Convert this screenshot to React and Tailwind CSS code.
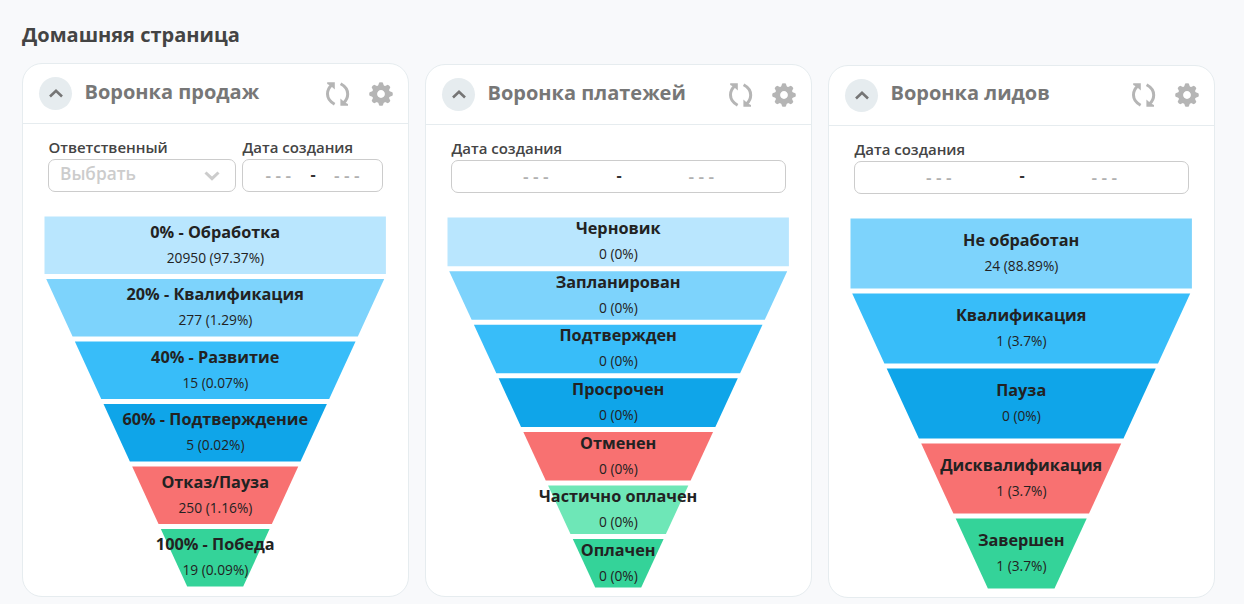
const C = {
  sky1: "#b9e6fe",
  sky2: "#7dd3fc",
  sky3: "#38bdf9",
  sky4: "#0fa5e9",
  red: "#f87171",
  mint: "#6ee7b7",
  green: "#34d399",
};

const CARDS = [
  {
    title: "Воронка продаж",
    select: true,
    bottomHalf: 28,
    stages: [
      ["0% - Обработка", "20950 (97.37%)", C.sky1],
      ["20% - Квалификация", "277 (1.29%)", C.sky2],
      ["40% - Развитие", "15 (0.07%)", C.sky3],
      ["60% - Подтверждение", "5 (0.02%)", C.sky4],
      ["Отказ/Пауза", "250 (1.16%)", C.red],
      ["100% - Победа", "19 (0.09%)", C.green],
    ],
  },
  {
    title: "Воронка платежей",
    bottomHalf: 23,
    stages: [
      ["Черновик", "0 (0%)", C.sky1],
      ["Запланирован", "0 (0%)", C.sky2],
      ["Подтвержден", "0 (0%)", C.sky3],
      ["Просрочен", "0 (0%)", C.sky4],
      ["Отменен", "0 (0%)", C.red],
      ["Частично оплачен", "0 (0%)", C.mint],
      ["Оплачен", "0 (0%)", C.green],
    ],
  },
  {
    title: "Воронка лидов",
    bottomHalf: 33.3,
    stages: [
      ["Не обработан", "24 (88.89%)", C.sky2],
      ["Квалификация", "1 (3.7%)", C.sky3],
      ["Пауза", "0 (0%)", C.sky4],
      ["Дисквалификация", "1 (3.7%)", C.red],
      ["Завершен", "1 (3.7%)", C.green],
    ],
  },
];

const WIDTH = 341.4;
const HEIGHT = 370;
const GAP = 5;

function Funnel({ stages, bottomHalf }) {
  const h = (HEIGHT - GAP * (stages.length - 1)) / stages.length;
  const mid = WIDTH / 2;
  const slope = (mid - 1.7 - bottomHalf) / (HEIGHT - h - GAP);
  const half = (y) => bottomHalf + (HEIGHT - y) * slope;
  return (
    <svg width="342" height="371" viewBox="-0.5 -0.6 342 371" className="block shrink-0 overflow-visible">
      {stages.map(([name, value, fill], i) => {
        const y0 = i * (h + GAP);
        const y1 = y0 + h;
        const t = i === 0 ? mid : half(y0);
        const b = i === 0 ? mid : half(y1);
        return (
          <polygon
            key={name}
            fill={fill}
            points={`${mid - t},${y0} ${mid + t},${y0} ${mid + b},${y1} ${mid - b},${y1}`}
          />
        );
      })}
      {stages.map(([name, value], i) => {
        const c = i * (h + GAP) + h / 2;
        return (
          <g key={name} textAnchor="middle" fill="#222">
            <text x={mid} y={c - 7.65} className="text-[16.25px] font-bold">{name}</text>
            <text x={mid + 0.2} y={c + 17.35} className="text-[13.75px]">{value}</text>
          </g>
        );
      })}
    </svg>
  );
}

function RefreshIcon() {
  return (
    <svg width="24" height="24" viewBox="0.4 0 24 24" fill="none" stroke="#b5b5b5" strokeWidth="3">
      <path d="M9 22.2C4.6 19.8 1.9 16.4 1.9 12C1.9 8.6 3.2 5.6 6 3.2" />
      <path d="M15 1.8C19.4 4.2 22.1 7.6 22.1 12C22.1 15.4 20.8 18.4 18 20.8" />
      <path d="M1.6 .2H9.2V7.6L7 5.4L4.6 3.6L1.6 2ZM22.4 23.8H14.8V16.4L17 18.6L19.4 20.4L22.4 22Z" fill="#b5b5b5" stroke="none" />
    </svg>
  );
}

function GearIcon() {
  return (
    <svg width="24" height="24" viewBox="-12 -12 24 24" className="ml-[19px]" fill="#b5b5b5">
      <circle r="6.5" fill="none" stroke="#b5b5b5" strokeWidth="5.2" />
      {[0, 45, 90, 135, 180, 225, 270, 315].map((a) => (
        <path key={a} transform={`rotate(${a})`} d="M-3 -8L-1.8 -11.4Q0 -12.2 1.8 -11.4L3 -8Z" />
      ))}
    </svg>
  );
}

function Label({ children }) {
  return <div className="h-[20px] pl-[0.4px] text-[15px] leading-[17.4px] font-semibold text-[#444]">{children}</div>;
}

function DateField() {
  return (
    <div className="flex-1">
      <Label>Дата создания</Label>
      <div className="flex h-[33px] items-center rounded-[7px] border border-[#ccc] pr-[3px] pl-[3px]">
        <span className="flex-1 pt-px text-center text-[17.3px] font-semibold text-[#b0b0b0]">- - -</span>
        <span className="w-[4px] pb-1 text-center text-[16px] leading-5 font-bold text-[#333]">-</span>
        <span className="flex-1 pt-px text-center text-[17.3px] font-semibold text-[#b0b0b0]">- - -</span>
      </div>
    </div>
  );
}

function Card({ title, select, stages, bottomHalf }) {
  return (
    <section className="flex h-[533.2px] w-[387px] flex-col rounded-[20px] border border-[#e6ecef] bg-white">
      <header className="flex h-[60px] shrink-0 items-center border-b border-[#e6ecef] pr-[15px] pl-4">
        <span className="flex size-[33px] items-center justify-center rounded-full bg-[#e6ecef]">
          <svg width="14" height="9" viewBox="0 0 14 9" fill="none" stroke="#757575" strokeWidth="2.6">
            <path d="M1 7.5L7 1.8L13 7.5" />
          </svg>
        </span>
        <h2 className="ml-[12.5px] flex-1 pb-1 text-[20px] leading-7 font-bold text-[#777]">{title}</h2>
        <RefreshIcon />
        <GearIcon />
      </header>
      <div className="flex gap-[6px] pt-[15px] pr-[25px] pl-[25px]">
        {select && (
          <div className="w-[188px]">
            <Label>Ответственный</Label>
            <div className="flex h-[33px] items-center justify-between rounded-[7px] border border-[#ccc] pr-[15px] pl-[11px]">
              <span className="pb-1 text-[17.3px] leading-6 font-semibold text-[#ccc]">Выбрать</span>
              <svg width="16" height="10" viewBox="0 0 16 10" fill="none" stroke="#ccc" strokeWidth="3">
                <path d="M1.5 1.5L8 7.7L14.5 1.5" />
              </svg>
            </div>
          </div>
        )}
        <DateField />
      </div>
      <div className="flex pt-[24px] pl-[21px]">
        <Funnel stages={stages} bottomHalf={bottomHalf} />
      </div>
    </section>
  );
}

export default function App() {
  return (
    <main className="h-[604px] w-[1244px] overflow-hidden bg-[#f8f9fb] pl-[22px] font-['Open_Sans',sans-serif]">
      <h1 className="h-[63px] pt-[21px] text-[20px] leading-7 font-bold text-[#444]">Домашняя страница</h1>
      <div className="flex gap-4">
        {CARDS.map((card, i) => (
          <div key={card.title} className={["pt-[0.4px]", "pt-[1.2px]", "pt-[1.9px]"][i]}>
            <Card {...card} />
          </div>
        ))}
      </div>
    </main>
  );
}
